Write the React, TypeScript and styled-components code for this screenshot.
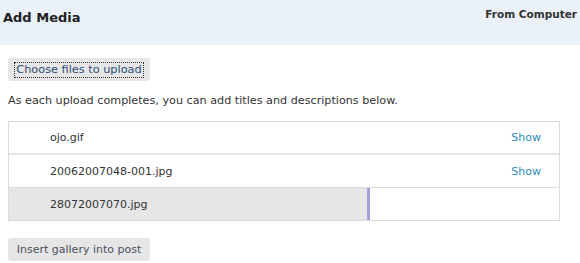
import styled, { createGlobalStyle } from 'styled-components'

const Global = createGlobalStyle`
  body {
    margin: 0;
    background: #fff;
    font-family: 'DejaVu Sans', Verdana, sans-serif;
    font-size: 11px;
    color: #333;
  }
`

const files = [
  { id: 1, name: 'ojo.gif', done: true },
  { id: 2, name: '20062007048-001.jpg', done: true },
  { id: 3, name: '28072007070.jpg', done: false, progress: 65 },
]

function App() {
  return (
    <>
      <Global />
      <Header>
        <Title>Add Media</Title>
        <Tab>From Computer</Tab>
      </Header>
      <Body>
        <Button>
          <Focus>Choose files to upload</Focus>
        </Button>
        <Note>As each upload completes, you can add titles and descriptions below.</Note>
        <Table>
          {files.map((f) => (
            <Row key={f.id}>
              {f.done ? (
                <>
                  <FileName>{f.name}</FileName>
                  <Toggle href='#'>Show</Toggle>
                </>
              ) : (
                <>
                  <Bar style={{ width: `${f.progress}%` }} />
                  <FileName $over>{f.name}</FileName>
                </>
              )}
            </Row>
          ))}
        </Table>
        <Button $gap={17}>Insert gallery into post</Button>
      </Body>
    </>
  )
}

const Header = styled.div`
  height: 45px;
  background: #eaf1f9;
  display: flex;
  justify-content: space-between;
  align-items: flex-start;
  padding: 0 3px;
`
const Title = styled.h3`
  margin: 10px 0 0;
  font-size: 13px;
  font-weight: bold;
  color: #222;
  line-height: 16px;
`
const Tab = styled.div`
  margin-top: 7px;
  font-size: 10.5px;
  font-weight: bold;
  color: #333;
  line-height: 14px;
`
const Body = styled.div`
  padding: 0 8px;
  display: flex;
  flex-direction: column;
  align-items: flex-start;
`
const Button = styled.button<{ $gap?: number }>`
  margin-top: ${({ $gap }) => $gap ?? 13}px;
  width: 142px;
  height: 23px;
  padding: 0;
  border: none;
  border-radius: 3px;
  background: #e6e6e6;
  font-family: 'DejaVu Sans', Verdana, sans-serif;
  font-size: 11px;
  color: #464f5c;
  display: flex;
  align-items: center;
  justify-content: center;
`
const Focus = styled.span`
  color: #2e4e73;
  border: 1px dotted #333;
  padding: 0 1px;
  line-height: 14px;
  font-size: 11.3px;
`
const Note = styled.p`
  margin: 13px 0 0;
  line-height: 14px;
  font-size: 11.2px;
  color: #333;
`
const Table = styled.div`
  margin-top: 13px;
  width: 552px;
  border: 1px solid #dcdcdc;
  box-sizing: border-box;
`
const Row = styled.div`
  position: relative;
  height: 32px;
  display: flex;
  align-items: center;
  justify-content: space-between;
  padding: 0 18px 0 41px;
  border-bottom: 1px solid #dcdcdc;
  &:first-child {
    border-bottom: 2px solid #e6e6e6;
    height: 31px;
  }
  &:last-child {
    border-bottom: none;
  }
`
const Bar = styled.div`
  position: absolute;
  left: 0;
  top: 0;
  bottom: 0;
  background: #e6e6e6;
  border-right: 3px solid #a1a1df;
`
const FileName = styled.span<{ $over?: boolean }>`
  position: relative;
  z-index: ${({ $over }) => ($over ? 1 : 'auto')};
  font-size: 11px;
  color: #333;
`
const Toggle = styled.a`
  font-size: 11px;
  color: #2a8cb6;
  text-decoration: none;
`

export default App
